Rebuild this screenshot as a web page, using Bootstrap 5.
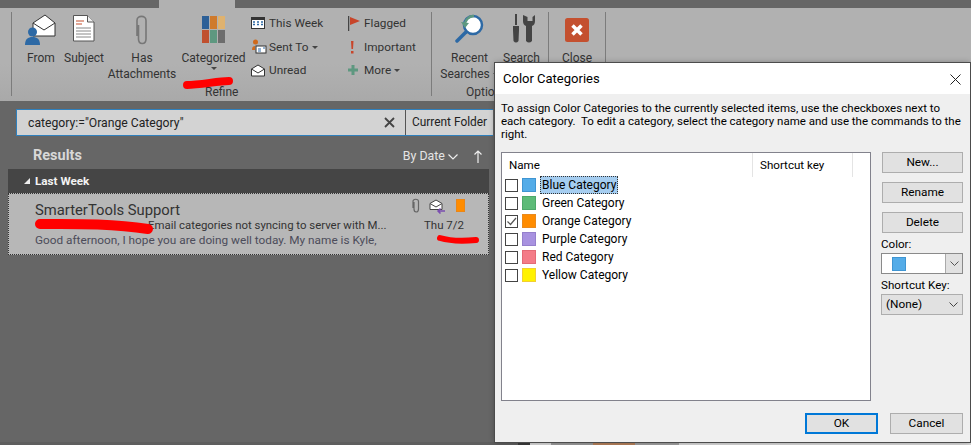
<!DOCTYPE html>
<html lang="en">
<head>
<meta charset="utf-8">
<title>Color Categories</title>
<link href="https://cdn.jsdelivr.net/npm/bootstrap@5.3.0/dist/css/bootstrap.min.css" rel="stylesheet">
<style>
html,body{margin:0;height:445px;overflow:hidden;background:#666}
body{font-family:Roboto,"Noto Sans",sans-serif;font-size:12px;line-height:16px;color:#000}
.app{position:relative;width:971px;height:445px;overflow:hidden;background:#666}
.tabstrip{height:8px;background:#666;padding-left:159px;flex:none}
.tabstrip i{display:block;width:76px;height:8px;background:#b1b1b1}
.ribbon{height:93px;background:linear-gradient(#b1b1b1 60%,#a9a9a9);flex:none;padding:4px 0 5px 11px;color:#333}
.rgroup{position:relative;border-left:1px solid #7c7c7c;height:84px}
.rgroup.g1{width:420px}.rgroup.g2{width:117px}.rgroup.g3{width:58px;border-right:1px solid #7c7c7c}
.rcap{position:absolute;bottom:-3px;font-size:12px;line-height:14px;color:#333}
.bigbtn{display:flex;flex-direction:column;align-items:center;flex:none;text-align:center;font-size:12px;line-height:16px}
.bigbtn svg{display:block;height:33px;flex:none;margin-bottom:5px}
.smcol{display:flex;flex-direction:column;gap:7.500px;flex:none}
.smrow{display:flex;align-items:center;height:16px;white-space:nowrap;font-size:11.800px}
.smic{width:18px;display:flex;justify-content:flex-start;flex:none}
.col2 .smic{width:16px}
.caret{display:inline-block;border:3px solid transparent;border-top:3px solid #444;border-bottom:0;margin-left:3px;vertical-align:middle}
.searchrow{margin:8px 0 0 16px;width:477px;height:27px;background:#d3d3d3;border:1px solid #2f80bd;border-right:0;flex:none;color:#222;align-items:center}
.q{flex:1;padding-left:11px;font-size:12.200px}
.qx{width:20px;margin-right:6px;display:flex;justify-content:center}
.scope{border-left:1px solid #555;height:25px;padding-left:6px;width:88px;line-height:25px;white-space:nowrap;font-size:11.900px}
.reshead{height:33px;padding:7px 6px 0 33px;align-items:center;flex:none;width:489px;color:#e4e4e4}
.restitle{font-weight:700;font-size:14.500px;color:#d8d8d8;flex:1}
.sorter{font-size:12.400px;margin-right:15px}
.grouphd{margin-left:8px;width:481px;height:24px;background:#454545;color:#f2f2f2;font-weight:700;font-size:11.700px;align-items:center;padding-left:16px;gap:5px;flex:none}
.tri{width:0;height:0;border-style:solid;border-width:0 0 6px 6px;border-color:transparent transparent #eee transparent}
.msg{margin-left:8px;width:481px;height:62px;background:#b7b7b7;border:1px dotted #333;flex:none;position:relative;padding:6px 0 0 26px}
.sender{font-size:14.800px;line-height:20px;color:#333;white-space:nowrap}
.subj{font-size:11.400px;line-height:16px;color:#333;padding-left:113px;white-space:nowrap;margin-top:-3px}
.prev{font-size:11.800px;line-height:15px;color:#4c4c5a;white-space:nowrap}
.meta{position:absolute;top:5px;right:23px;display:flex;align-items:flex-start;gap:10px}
.meta .clip{margin-top:-1px;margin-right:-1px;margin-left:1px}
.msgdate{position:absolute;right:24px;top:23px;font-size:11.500px;color:#333}
.under{margin-top:auto;height:3px;display:flex;flex:none}
.under b{display:block;height:3px}
.dlg{position:absolute;left:495px;top:63px;width:475px;height:379px;background:#efefef;box-shadow:0 0 0 1px #4c4c4c,0 0 6px rgba(0,0,0,.35);display:flex;flex-direction:column}
.dlgtitle{height:31px;background:#fff;padding:1px 9px 0 8px;align-items:center;flex:none;font-size:13px}
.dlgbody{padding:8px 7px 0 6px;position:relative;flex:1;font-size:11.800px;line-height:13px}
.intro{height:38px;margin:0 0 12px;white-space:nowrap;font-size:11.500px}
.panes{display:flex;gap:10px}
.listbox{width:370px;height:249px;background:#fff;border:1px solid #82828c;flex:none}
.lhead{height:23px;display:flex;align-items:flex-start}
.lhead span{height:24px;line-height:25px;border-right:1px solid #e4e4e4;padding-left:7px;font-size:11.600px}
.lrow{height:18px;display:flex;align-items:center;padding-left:3px}
.cb{width:13px;height:13px;border:1px solid #444;background:#fff;display:flex;flex:none}
.sw{width:14px;height:14px;margin:0 4px 0 4px;border:1px solid;flex:none}
.lname{font-size:12px;line-height:16px;padding:0 1px 0 1px;border:1px dotted transparent;white-space:nowrap}
.lname.sel{background:#a5cdf0;border-color:#333}
.side{width:82px;flex:none;display:flex;flex-direction:column}
.wbtn.btn{--bs-btn-padding-y:0;--bs-btn-padding-x:0;--bs-btn-font-size:11.800px;--bs-btn-line-height:19px;--bs-btn-border-radius:0;--bs-btn-bg:#e1e1e1;--bs-btn-border-color:#adadad;--bs-btn-color:#000;--bs-btn-hover-bg:#e1e1e1;--bs-btn-hover-color:#000;--bs-btn-hover-border-color:#adadad;height:21px;width:81px;margin-left:1px}
.side .wbtn{margin-bottom:9px}
.side .wbtn.lastb{margin-bottom:5px}
.slabel{font-size:11.600px;line-height:13px;white-space:nowrap}
.combo{height:21px;width:82px;border:1px solid #8a8a8a;background:#fff;display:flex;align-items:center;margin:2px 0 5px;padding-left:10px}
.combo i{display:block;width:14px;height:14px;background:#54ace8;border:1px solid #3f95d2}
.combo em{margin-left:auto;width:17px;height:19px;background:#e1e1e1;border-left:1px solid #aaa;display:flex;align-items:center;justify-content:center}
.selbox{height:21px;width:82px;border:1px solid #adadad;background:#e1e1e1;display:flex;align-items:center;justify-content:space-between;padding:0 4px;margin-top:2px;font-size:11.800px}
.dlgfoot{position:absolute;right:7px;bottom:8px;display:flex;gap:12px}
.dlgfoot .wbtn.btn{margin:0;width:73px}
.dlgfoot .okb.btn{--bs-btn-border-color:#0078d7;--bs-btn-hover-border-color:#0078d7;border-width:2px;width:73px;--bs-btn-line-height:17px}
.scribble{position:absolute;left:0;top:0;pointer-events:none}
</style>
</head>
<body>
<div class="app d-flex flex-column">
  <div class="tabstrip"><i></i></div>
  <div class="ribbon d-flex">
    <div class="rgroup g1 d-flex">
      <div class="bigbtn" style="width:46px;margin-left:6px">
        <svg width="32" height="33" viewBox="0 0 32 33"><path d="M8 11 20 3l10 8v13H8z" fill="#fff" stroke="#333"/><path d="M8 11l11 7 11-7" fill="#fff" stroke="#333"/><circle cx="7.500" cy="20" r="4.500" fill="#2d69a5"/><path d="M0 33c0-6 3-8 7.500-8s7.500 2 7.500 8z" fill="#2d69a5"/></svg>
        <span>From</span>
      </div>
      <div class="bigbtn" style="width:40px">
        <svg width="22" height="33" viewBox="0 0 22 33"><path d="M.5 3.500h14l6.500 6.500v19H.5z" fill="#fff" stroke="#555"/><path d="M14.500 3.500V10H21" fill="#eee" stroke="#555"/><path d="M3 9h8M3 12h6" stroke="#c4502f" stroke-width="1.200"/><path d="M3 16h15M3 19h15M3 22h15M3 25h15" stroke="#888"/></svg>
        <span>Subject</span>
      </div>
      <div class="bigbtn" style="width:76px">
        <svg width="14" height="33" viewBox="0 0 14 33"><path d="M3.500 11v14c0 6 7.500 6 7.500 0V6.500C11 1 2 1 2 6.500V22" transform="translate(0 2)" fill="none" stroke="#777" stroke-width="1.600"/></svg>
        <span>Has<br>Attachments</span>
      </div>
      <div class="bigbtn" style="width:67px">
        <svg width="24" height="33" viewBox="0 0 24 33"><g transform="translate(0 4)"><rect width="7" height="13" fill="#2d6097"/><rect x="8" width="7" height="13" fill="#cf7a2c"/><rect x="16" width="7" height="13" fill="#dfb26f"/><rect y="14" width="7" height="13" fill="#c0502f"/><rect x="8" y="14" width="7" height="13" fill="#5e9880"/><rect x="16" y="14" width="7" height="13" fill="#6d6d6d"/></g></svg>
        <span>Categorized</span>
        <span class="caret" style="margin:1px 0 0"></span>
      </div>
      <div class="smcol" style="width:95px;padding:3px 0 0 4px">
        <div class="smrow"><span class="smic"><svg width="14" height="12" viewBox="0 0 14 12"><rect x=".5" y=".5" width="13" height="11" fill="#fff" stroke="#333"/><rect width="14" height="3" fill="#333"/><path d="M2 5h2M6 5h2M10 5h2M2 7.500h2M6 7.500h2M10 7.500h2" stroke="#2d69a5" stroke-width="1.500"/></svg></span><span>This Week</span></div>
        <div class="smrow"><span class="smic"><svg width="16" height="16" viewBox="0 0 16 16"><circle cx="4.500" cy="3" r="2.500" fill="#cf6a1c"/><path d="M1 11c0-3 1-4 3-4v4z" fill="#cf6a1c"/><rect x="5" y="7" width="10" height="7" fill="#fff" stroke="#333"/><path d="M7 10h3M7 12h3M12 9h2" stroke="#2d69a5"/></svg></span><span>Sent To<span class="caret"></span></span></div>
        <div class="smrow"><span class="smic"><svg width="14" height="13" viewBox="0 0 14 13"><path d="M.5 5 7 1l6.500 4v7H.5z" fill="#fff" stroke="#333"/><path d="M.5 5 7 9l6.500-4" fill="none" stroke="#333"/></svg></span><span>Unread</span></div>
      </div>
      <div class="smcol col2" style="padding:3px 0 0 6px">
        <div class="smrow"><span class="smic"><svg width="13" height="15" viewBox="0 0 13 15"><path d="M.5 0v15" stroke="#444" stroke-width="1.500"/><path d="M2 1l10 4-10 4z" fill="#c8452a"/></svg></span><span>Flagged</span></div>
        <div class="smrow"><span class="smic"><svg width="10" height="14" viewBox="0 0 10 14"><path d="M3 1h2.500L5 9H3.500zM3 11h2.500v2.500H3z" fill="#c8452a"/></svg></span><span>Important</span></div>
        <div class="smrow"><span class="smic"><svg width="10" height="10" viewBox="0 0 10 10"><path d="M3.500 0h3v3.500H10v3H6.500V10h-3V6.500H0v-3h3.500z" fill="#5e9880"/></svg></span><span>More<span class="caret"></span></span></div>
      </div>
      <div class="rcap" style="left:193px">Refine</div>
    </div>
    <div class="rgroup g2 d-flex">
      <div class="bigbtn" style="width:71px;margin-left:2px">
        <svg width="30" height="33" viewBox="0 0 30 33"><circle cx="18" cy="13" r="9" fill="#fff" stroke="#2d69a5" stroke-width="2.500"/><path d="M10 14a9 9 0 0 1 9-10" fill="none" stroke="#5e9880" stroke-width="2.500"/><path d="M6 10l4 6 4-5z" fill="#5e9880"/><path d="M11 20 2 29" stroke="#2d69a5" stroke-width="3.500" stroke-linecap="round"/></svg>
        <span>Recent<br>Searches<span class="caret"></span></span>
      </div>
      <div class="bigbtn" style="width:33px">
        <svg width="30" height="33" viewBox="0 0 30 33"><path d="M8 2h2v11H8zM6 14h6v4l-.500 11q-2.500 3-5 0L6 18z" fill="#444"/><path d="M16 3v6q0 4 3 5v15q3 3 6 0V14q3-1 3-5V3l-2.500 2V9h-5V5z" fill="#444"/></svg>
        <span>Search</span>
      </div>
      <div class="rcap" style="left:34px">Options</div>
    </div>
    <div class="rgroup g3 d-flex justify-content-center">
      <div class="bigbtn">
        <svg width="24" height="33" viewBox="0 0 24 33"><rect y="6" width="24" height="24" rx="2.500" fill="#c4502f"/><path d="M7.500 13.500 16.500 22.500M16.500 13.500 7.500 22.500" stroke="#fff" stroke-width="3.500"/></svg>
        <span>Close</span>
      </div>
    </div>
  </div>

  <div class="searchrow d-flex">
    <div class="q">category:="Orange Category"</div>
    <div class="qx"><svg width="11" height="11" viewBox="0 0 11 11"><path d="M1 1l9 9M10 1l-9 9" stroke="#444" stroke-width="1.800"/></svg></div>
    <div class="scope">Current Folder</div>
  </div>

  <div class="reshead d-flex">
    <div class="restitle">Results</div>
    <div class="sorter">By Date <svg width="10" height="6" viewBox="0 0 10 6"><path d="M.5.500 5 5 9.500.500" fill="none" stroke="#eee" stroke-width="1.200"/></svg></div>
    <svg width="10" height="13" viewBox="0 0 10 13"><path d="M5 13V1M1.500 4.500 5 1l3.500 3.500" fill="none" stroke="#eee" stroke-width="1.200"/></svg>
  </div>

  <div class="grouphd d-flex"><span class="tri"></span><span>Last Week</span></div>
  <div class="msg">
    <div class="sender">SmarterTools Support</div>
    <div class="subj">Email categories not syncing to server with M...</div>
    <div class="prev">Good afternoon, I hope you are doing well today. My name is Kyle,</div>
    <div class="meta">
      <svg class="clip" width="8" height="15" viewBox="0 0 8 15"><path d="M2 4v7c0 4 4.500 4 4.500 0V3.500C6.500 .500 1 .500 1 3.500V10" fill="none" stroke="#666" stroke-width="1.200"/></svg>
      <svg width="17" height="15" viewBox="0 0 17 15"><path d="M1 4.500 7 1l6 3.500v6H1z" fill="#fff" stroke="#444"/><path d="M1 4.500 7 8l6-3.500" fill="#fff" stroke="#444"/><path d="M16 12H9M11.500 9.500 9 12l2.500 2.500" fill="none" stroke="#7b4fb0" stroke-width="1.500"/></svg>
      <svg width="9" height="13" viewBox="0 0 9 13"><rect width="9" height="13" fill="#ff8c00" stroke="#d9822b"/></svg>
    </div>
    <div class="msgdate">Thu 7/2</div>
  </div>

  <div class="under">
    <b style="width:518px;background:#5e5e5e"></b><b style="width:12px;background:#3a3a3a"></b><b style="width:21px;background:#d8d8d8"></b><b style="width:42px;background:#9a9a9a"></b><b style="width:42px;background:#b5805a"></b><b style="width:44px;background:#a0a0a0"></b><b style="flex:1;background:#d8d8d8"></b>
  </div>

  <svg class="scribble" width="971" height="445" viewBox="0 0 971 445" aria-hidden="true">
    <path d="M187 85C200 85 218 81 229 81" fill="none" stroke="#f00" stroke-width="8" stroke-linecap="round"/>
    <path d="M40 224C70 224 110 223 148 229" fill="none" stroke="#f00" stroke-width="10" stroke-linecap="round"/>
    <path d="M440 238C450 241 465 241 476 240" fill="none" stroke="#f00" stroke-width="6" stroke-linecap="round"/>
  </svg>

  <div class="dlg">
    <div class="dlgtitle d-flex justify-content-between">
      <span>Color Categories</span>
      <svg width="11" height="11" viewBox="0 0 11 11"><path d="M.5.500l10 10M10.500.500l-10 10" stroke="#222"/></svg>
    </div>
    <div class="dlgbody">
      <p class="intro">To assign Color Categories to the currently selected items, use the checkboxes next to<br>each category.&nbsp; To edit a category, select the category name and use the commands to the<br>right.</p>
      <div class="panes">
        <div class="listbox">
          <div class="lhead"><span style="width:251px">Name</span><span style="width:100px">Shortcut key</span></div>
          <div class="lrow"><span class="cb"></span><span class="sw" style="background:#54ace8;border-color:#3f95d2"></span><span class="lname sel">Blue Category</span></div>
          <div class="lrow"><span class="cb"></span><span class="sw" style="background:#5dbb78;border-color:#4ea86a"></span><span class="lname">Green Category</span></div>
          <div class="lrow"><span class="cb"><svg width="11" height="11" viewBox="0 0 11 11"><path d="M1.500 5.500 4.500 8.500 10 2" fill="none" stroke="#555" stroke-width="1.200"/></svg></span><span class="sw" style="background:#ff8c00;border-color:#e98a1e"></span><span class="lname">Orange Category</span></div>
          <div class="lrow"><span class="cb"></span><span class="sw" style="background:#a892e0;border-color:#9580cc"></span><span class="lname">Purple Category</span></div>
          <div class="lrow"><span class="cb"></span><span class="sw" style="background:#f47c88;border-color:#e46a76"></span><span class="lname">Red Category</span></div>
          <div class="lrow"><span class="cb"></span><span class="sw" style="background:#fff200;border-color:#f2cf33"></span><span class="lname">Yellow Category</span></div>
        </div>
        <div class="side">
          <button type="button" class="btn wbtn">New...</button>
          <button type="button" class="btn wbtn">Rename</button>
          <button type="button" class="btn wbtn lastb">Delete</button>
          <div class="slabel">Color:</div>
          <div class="combo"><i></i><em><svg width="9" height="6" viewBox="0 0 9 6"><path d="M.5.500 4.500 4.500 8.500.500" fill="none" stroke="#555"/></svg></em></div>
          <div class="slabel">Shortcut Key:</div>
          <div class="selbox"><span>(None)</span><svg width="9" height="6" viewBox="0 0 9 6"><path d="M.5.500 4.500 4.500 8.500.500" fill="none" stroke="#444"/></svg></div>
        </div>
      </div>
      <div class="dlgfoot">
        <button type="button" class="btn wbtn okb">OK</button>
        <button type="button" class="btn wbtn">Cancel</button>
      </div>
    </div>
  </div>
</div>
<script src="https://cdn.jsdelivr.net/npm/bootstrap@5.3.0/dist/js/bootstrap.bundle.min.js"></script>
</body>
</html>
